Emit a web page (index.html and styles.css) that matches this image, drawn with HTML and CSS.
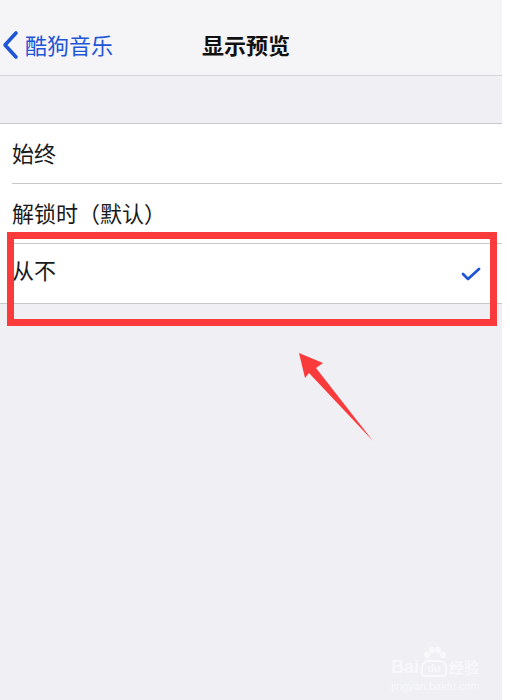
FILE: index.html
```html
<!DOCTYPE html>
<html lang="zh-CN">
<head>
<meta charset="UTF-8">
<meta name="viewport" content="width=device-width, initial-scale=1.0">
<title>显示预览</title>
<link rel="stylesheet" href="styles.css">
</head>
<body>
<div class="screen">
    <header class="nav">
        <a class="back" href="#">
            <svg class="chevron" width="18" height="30" viewBox="0 0 18 30">
                <polyline points="14,3 3,15 14,27" fill="none" stroke="#1f56d6" stroke-width="3.6" stroke-linecap="round" stroke-linejoin="round"/>
            </svg>
            <span>酷狗音乐</span>
        </a>
        <h1>显示预览</h1>
    </header>

    <div class="spacer"></div>

    <ul class="list">
        <li class="row"><div class="row-inner">始终</div></li>
        <li class="row"><div class="row-inner">解锁时（默认）</div></li>
        <li class="row last">
            <div class="row-inner">
                <span class="label-high">从不</span>
                <svg class="check" width="20" height="16" viewBox="0 0 20 16">
                    <polyline points="2,8 7,13 18,3" fill="none" stroke="#1f56d6" stroke-width="2.8" stroke-linecap="round" stroke-linejoin="round"/>
                </svg>
            </div>
        </li>
    </ul>

    <!-- annotation drawn on top of the screenshot -->
    <div class="highlight"></div>
    <svg class="arrow" width="510" height="700" viewBox="0 0 510 700">
        <polygon points="299,353 323,363 316,368 373,441 309,373 305,378" fill="#fb3b3b"/>
    </svg>

    <div class="watermark">
        <div class="wm-top">
            <span class="wm-bai">Bai</span>
            <span class="wm-paw">
                <svg width="28" height="14" viewBox="0 0 28 14">
                    <ellipse cx="7" cy="9" rx="3" ry="3.5" fill="currentColor"/>
                    <ellipse cx="12" cy="4" rx="3" ry="3.5" fill="currentColor"/>
                    <ellipse cx="18" cy="4" rx="3" ry="3.5" fill="currentColor"/>
                    <ellipse cx="23" cy="9" rx="3" ry="3.5" fill="currentColor"/>
                </svg>
                <span class="wm-du">du</span>
            </span>
            <span class="wm-jy">经验</span>
        </div>
        <div class="wm-url">jingyan.baidu.com</div>
    </div>
</div>
</body>
</html>
```

FILE: styles.css
```css
body {
    margin: 0;
    background: #ffffff;
    font-family: "Noto Sans CJK SC", "Noto Sans", sans-serif;
    color: #1c1c1e;
}
.screen {
    position: relative;
    width: 502px;
    min-height: 700px;
    background: #efeff4;
    overflow: hidden;
}
.nav {
    box-sizing: border-box;
    height: 76px;
    padding: 14px 10px 0 0;
    display: flex;
    align-items: flex-start;
    justify-content: center;
    position: relative;
    background: #f5f5f7;
    border-bottom: 1px solid #d6d6da;
}
.nav h1 {
    margin: 0;
    height: 60px;
    line-height: 60px;
    font-size: 22px;
    font-weight: 700;
    color: #111111;
}
.back {
    position: absolute;
    left: 2px;
    top: 14px;
    height: 60px;
    display: flex;
    align-items: center;
    gap: 5px;
    color: #1f56d6;
    text-decoration: none;
    font-size: 22px;
}
.chevron {
    margin-top: 1px;
}
.spacer {
    height: 47px;
}
.list {
    list-style: none;
    margin: 0;
    padding: 0;
    background: #ffffff;
    border-top: 1px solid #c8c7cc;
    border-bottom: 1px solid #c8c7cc;
}
.row {
    padding-left: 12px;
}
.row-inner {
    box-sizing: border-box;
    height: 60px;
    padding: 0 21px 4px 0;
    display: flex;
    align-items: center;
    justify-content: space-between;
    font-size: 22px;
    color: #1a1a1a;
    border-bottom: 1px solid #c8c7cc;
}
.row.last .row-inner {
    height: 59px;
    border-bottom: none;
}
.label-high {
    margin-bottom: 6px;
}
.check {
    margin-top: 4px;
}
.highlight {
    position: absolute;
    left: 7px;
    top: 232px;
    width: 476px;
    height: 80px;
    border: 7px solid #fb3b3b;
}
.arrow {
    position: absolute;
    left: 0;
    top: 0;
    pointer-events: none;
}
.watermark {
    position: absolute;
    left: 391px;
    top: 646px;
    color: rgba(255, 255, 255, 0.6);
    font-family: "Liberation Sans", sans-serif;
}
.wm-top {
    display: flex;
    align-items: flex-end;
    gap: 1px;
    font-weight: 700;
}
.wm-bai {
    font-size: 18px;
    line-height: 20px;
}
.wm-paw {
    display: flex;
    flex-direction: column;
    align-items: center;
}
.wm-du {
    font-size: 11px;
    line-height: 12px;
    padding: 0 4px 1px;
    border-radius: 7px 7px 4px 4px;
    border: 2px solid rgba(255, 255, 255, 0.6);
}
.wm-jy {
    font-family: "Noto Sans CJK SC", sans-serif;
    font-size: 15px;
    line-height: 20px;
}
.wm-url {
    font-size: 11px;
    margin-top: 3px;
}
```
